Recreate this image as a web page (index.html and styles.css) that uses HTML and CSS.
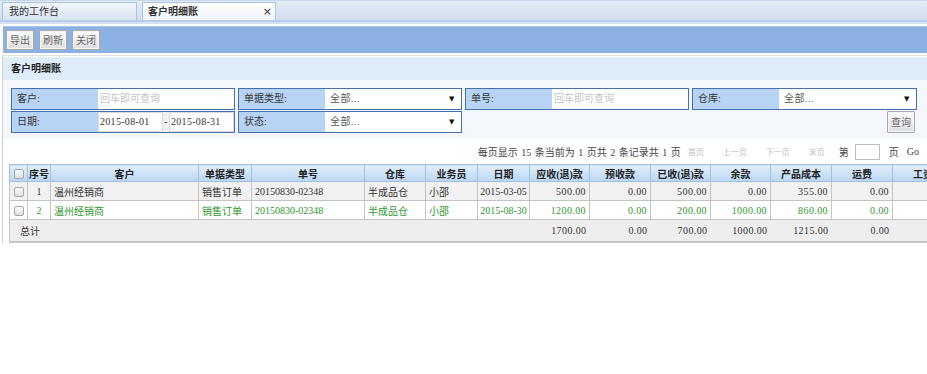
FILE: index.html
```html
<!DOCTYPE html>
<html lang="zh-CN">
<head>
<meta charset="utf-8">
<title>客户明细账</title>
<link rel="stylesheet" href="styles.css">
</head>
<body>
<div class="tabbar">
  <div class="tab">我的工作台</div>
  <div class="tab active"><span>客户明细账</span><span class="close">×</span></div>
</div>
<div class="sep"></div>
<div class="toolbar">
  <button class="btn">导出</button>
  <button class="btn">刷新</button>
  <button class="btn">关闭</button>
</div>
<div class="main">
  <div class="panel-title">客户明细账</div>
  <div class="filters">
    <div class="frow">
      <div class="fg"><div class="fl">客户:</div><div class="fv ph">回车即可查询</div></div>
      <div class="fg"><div class="fl">单据类型:</div><div class="fv sel"><span>全部...</span><span class="arr">▼</span></div></div>
      <div class="fg"><div class="fl">单号:</div><div class="fv ph">回车即可查询</div></div>
      <div class="fg wide"><div class="fl">仓库:</div><div class="fv sel"><span>全部...</span><span class="arr">▼</span></div></div>
    </div>
    <div class="frow">
      <div class="fg"><div class="fl">日期:</div><div class="fdate"><span class="din">2015-08-01</span><span class="dash">-</span><span class="din">2015-08-31</span></div></div>
      <div class="fg"><div class="fl">状态:</div><div class="fv sel"><span>全部...</span><span class="arr">▼</span></div></div>
      <button class="btn qbtn">查询</button>
    </div>
  </div>
  <div class="pager">
    <span class="pinfo">每页显示 15 条当前为 1 页共 2 条记录共 1 页</span>
    <span class="dis pa">首页</span>
    <span class="dis pb">上一页</span>
    <span class="dis pc">下一页</span>
    <span class="dis pd">末页</span>
    <span class="pe">第</span>
    <span class="pinput"></span>
    <span class="pf">页</span>
    <span>Go</span>
  </div>
  <table class="grid">
    <colgroup>
      <col style="width:18px"><col style="width:23px"><col style="width:148px"><col style="width:53px"><col style="width:113px"><col style="width:61px"><col style="width:52px"><col style="width:52px"><col style="width:60px"><col style="width:61px"><col style="width:60px"><col style="width:60px"><col style="width:61px"><col style="width:61px"><col style="width:61px">
    </colgroup>
    <thead>
      <tr>
        <th><span class="cb"></span></th><th>序号</th><th>客户</th><th>单据类型</th><th>单号</th><th>仓库</th><th>业务员</th><th>日期</th><th>应收(退)款</th><th>预收款</th><th>已收(退)款</th><th>余款</th><th>产品成本</th><th>运费</th><th>工资</th>
      </tr>
    </thead>
    <tbody>
      <tr class="r1">
        <td class="c"><span class="cb"></span></td><td class="c">1</td><td>温州经销商</td><td>销售订单</td><td>20150830-02348</td><td>半成品仓</td><td>小邵</td><td class="c">2015-03-05</td><td class="n">500.00</td><td class="n">0.00</td><td class="n">500.00</td><td class="n">0.00</td><td class="n">355.00</td><td class="n">0.00</td><td></td>
      </tr>
      <tr class="r2">
        <td class="c"><span class="cb"></span></td><td class="c">2</td><td>温州经销商</td><td>销售订单</td><td>20150830-02348</td><td>半成品仓</td><td>小邵</td><td class="c">2015-08-30</td><td class="n">1200.00</td><td class="n">0.00</td><td class="n">200.00</td><td class="n">1000.00</td><td class="n">860.00</td><td class="n">0.00</td><td></td>
      </tr>
      <tr class="total">
        <td colspan="3" class="tl">总计</td><td></td><td></td><td></td><td></td><td></td><td class="n">1700.00</td><td class="n">0.00</td><td class="n">700.00</td><td class="n">1000.00</td><td class="n">1215.00</td><td class="n">0.00</td><td></td>
      </tr>
    </tbody>
  </table>
</div>
</body>
</html>
```
FILE: styles.css
```css
html, body {
  margin: 0;
  padding: 0;
  background: #fff;
  overflow: hidden;
  width: 927px;
  height: 374px;
}
body {
  font-family: "Liberation Serif", "Noto Sans CJK SC", serif;
  font-size: 10px;
  color: #333;
}
.tabbar {
  height: 19px;
  padding: 0 0 0 2px;
  display: flex;
  align-items: flex-end;
  gap: 5px;
  background: linear-gradient(#e3ebf6, #d2deef);
  border-top: 1px solid #c8d7ec;
  border-bottom: 2px solid #b9cdea;
}
.tab {
  box-sizing: border-box;
  width: 135px;
  height: 18px;
  border: 1px solid #a9c1e3;
  border-bottom: none;
  background: linear-gradient(#f1f5fb, #d8e3f2);
  padding-left: 6px;
  line-height: 17px;
  color: #333;
}
.tab.active {
  width: 134px;
  background: linear-gradient(#ffffff, #eef3fa);
  font-weight: bold;
  display: flex;
  justify-content: space-between;
  padding-right: 3px;
  padding-left: 5px;
}
.tab .close {
  font-weight: normal;
  font-family: "DejaVu Sans", sans-serif;
  font-size: 11px;
  color: #333;
}
.sep {
  height: 2px;
  background: #d3e1f3;
  border-bottom: 2px solid #fff;
}
.toolbar {
  margin-left: 3px;
  height: 27px;
  background: #8cb2e4;
  border-top: 1px solid #a8c5ec;
  display: flex;
  align-items: center;
  gap: 5px;
  padding-left: 3px;
  box-sizing: border-box;
}
.btn {
  box-sizing: border-box;
  height: 20px;
  width: 28px;
  padding: 0;
  border: 1px solid #a8a8a8;
  border-radius: 1px;
  background: linear-gradient(#fdfdfd, #dedede);
  font-family: "Noto Sans CJK SC", sans-serif;
  font-size: 10px;
  color: #666;
  line-height: 18px;
  box-shadow: inset 0 0 0 1px #f6f6f6;
}
.main {
  margin-left: 2px;
  border-left: 1px solid #cfcfcf;
  border-top: 1px solid #e1e1e1;
  margin-top: 2px;
  padding-top: 1px;
}
.panel-title {
  height: 23px;
  line-height: 23px;
  background: #dfecfa;
  padding-left: 8px;
  font-weight: bold;
  color: #222;
}
.filters {
  background: #f4f8fd;
  padding: 8px 0 5px 8px;
}
.frow {
  display: flex;
  gap: 3px;
  height: 22px;
  margin-bottom: 1px;
}
.fg {
  box-sizing: border-box;
  width: 224px;
  height: 22px;
  border: 1px solid #4471ad;
  display: flex;
  background: #b7d4f5;
}
.fg.wide { width: 225px; }
.fl {
  width: 86px;
  flex: none;
  line-height: 20px;
  padding-left: 5px;
  box-sizing: border-box;
  color: #333;
}
.fv {
  flex: 1;
  background: #fff;
  line-height: 20px;
  padding-left: 5px;
}
.fv.ph { color: #c4c4c4; padding-left: 2px; }
.fv.sel {
  display: flex;
  justify-content: space-between;
  padding-right: 6px;
  color: #555;
  letter-spacing: 0.5px;
}
.arr {
  font-family: "DejaVu Sans", sans-serif;
  font-size: 7px;
  color: #111;
}
.fdate {
  flex: 1;
  display: flex;
  background: #eef2f7;
  align-items: stretch;
}
.din {
  box-sizing: border-box;
  width: 65px;
  background: #fff;
  border: 1px solid #dcdcdc;
  line-height: 18px;
  padding-left: 1px;
  color: #333;
  letter-spacing: 0.3px;
}
.dash {
  width: 6px;
  text-align: center;
  line-height: 20px;
}
.qbtn {
  margin-left: auto;
  margin-right: 12px;
  width: 28px;
  height: 22px;
}
.pager {
  display: flex;
  align-items: center;
  justify-content: flex-end;
  height: 25px;
  padding-right: 8px;
  color: #444;
}
.pinfo { margin-right: 7px; word-spacing: 1px; }
.dis { color: #c0c0c0; font-size: 8px; }
.pa, .pb, .pc { margin-right: 19px; }
.pd { margin-right: 14px; }
.pe { margin-right: 6px; }
.pinput {
  box-sizing: border-box;
  width: 25px;
  height: 16px;
  border: 1px solid #bdbdbd;
  background: #fff;
  margin-right: 9px;
}
.pf { margin-right: 8px; }
.grid {
  margin-left: 6px;
  border-collapse: collapse;
  table-layout: fixed;
  width: 944px;
}
.grid th {
  height: 16px;
  padding: 0;
  background: linear-gradient(#e3effc, #b9d6f4);
  border: 1px solid #a4c0e0;
  font-weight: bold;
  color: #222;
  text-align: center;
  white-space: nowrap;
  overflow: hidden;
}
.grid td {
  height: 18px;
  padding: 0 3px;
  border: 1px solid #c4c4c4;
  white-space: nowrap;
  overflow: hidden;
}
.grid td.c { text-align: center; padding: 0; }
.grid td.n { text-align: right; letter-spacing: 0.4px; }
.r1 td { background: #f1f1f1; color: #333; }
.r2 td { background: #fff; color: #2f962f; }
.total td {
  height: 21px;
  background: #eeeeee;
  border-left: none;
  border-right: none;
  border-bottom: 2px solid #c6c6c6;
}
.total td.tl {
  border-left: 1px solid #c4c4c4;
  padding-left: 10px;
}
.cb {
  display: inline-block;
  box-sizing: border-box;
  width: 10px;
  height: 10px;
  border: 1px solid #a3a7ad;
  border-radius: 2px;
  background: linear-gradient(#ffffff, #dcdcdc);
  vertical-align: middle;
}
```
